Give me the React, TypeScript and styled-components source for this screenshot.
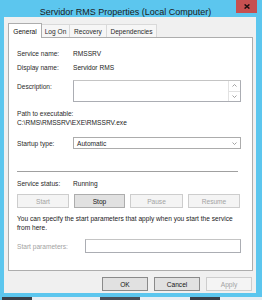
import React from "react";
import styled, { createGlobalStyle, css } from "styled-components";

const Global = createGlobalStyle`
  html, body {
    margin: 0;
    padding: 0;
    background: #5cc6ee;
  }
  * {
    box-sizing: border-box;
  }
`;

const FRAME = "#5cc6ee";
const FONT = `"Liberation Sans", Arial, sans-serif`;

const Window = styled.div`
  width: 262px;
  height: 300px;
  background: ${FRAME};
  display: flex;
  flex-direction: column;
  font-family: ${FONT};
  font-size: 6.6px;
  color: #1e1e1e;
  overflow: hidden;
`;

const TitleBar = styled.div`
  height: 17px;
  display: grid;
  grid-template-columns: 1fr auto 1fr;
  align-items: start;
  padding-right: 5px;
`;

const Title = styled.div`
  grid-column: 2;
  font-size: 9px;
  line-height: 9px;
  margin-top: 8px;
  margin-right: 6px;
  color: #1b1b1b;
  white-space: nowrap;
`;

const CloseButton = styled.div`
  grid-column: 3;
  justify-self: end;
  width: 21px;
  height: 13px;
  background: #c75050;
  display: flex;
  align-items: center;
  justify-content: center;
`;

const Body = styled.div`
  flex: 1;
  margin: 0 6px 0 4px;
  background: #f0f0f0;
  display: flex;
  flex-direction: column;
  padding: 7px 3px 0 4px;
`;

const Tabs = styled.div`
  display: flex;
  height: 13px;
  position: relative;
  z-index: 1;
`;

const Tab = styled.div<{ $active?: boolean; $w: number }>`
  width: ${(p) => p.$w}px;
  height: 13px;
  margin-bottom: -1px;
  border: 1px solid #d9d9d9;
  border-bottom: none;
  border-left-width: 0;
  background: #f6f6f6;
  display: flex;
  align-items: center;
  justify-content: center;
  white-space: nowrap;
  color: #2a2a2a;
  ${(p) =>
    p.$active &&
    css`
      height: 15px;
      margin-top: -1px;
      border-color: #adadad;
      border-left-width: 1px;
      background: #fff;
      margin-bottom: -2px;
      color: #111;
    `}
`;

const Panel = styled.div`
  flex: 1;
  background: #fff;
  border: 1px solid #adadad;
  padding: 10px 11px 0 8px;
  display: flex;
  flex-direction: column;
`;

const Row = styled.div<{ $h: number; $mt?: number; $top?: boolean }>`
  display: flex;
  align-items: ${(p) => (p.$top ? "flex-start" : "center")};
  height: ${(p) => p.$h}px;
  margin-top: ${(p) => p.$mt ?? 0}px;
  white-space: nowrap;
`;

const Label = styled.div<{ $w?: number; $disabled?: boolean; $pt?: number }>`
  width: ${(p) => p.$w ?? 56}px;
  flex: none;
  padding-top: ${(p) => p.$pt ?? 0}px;
  color: ${(p) => (p.$disabled ? "#a2a2a2" : "#2b2b2b")};
`;

const Value = styled.div`
  color: #222;
`;

const TextBox = styled.div<{ $h: number }>`
  flex: 1;
  height: ${(p) => p.$h}px;
  border: 1px solid #abadb3;
  border-top-color: #c4c4c4;
  background: #fff;
  display: flex;
  justify-content: flex-end;
`;

const ScrollCol = styled.div`
  width: 12px;
  display: flex;
  flex-direction: column;
`;

const ScrollBtn = styled.div`
  flex: 1;
  border-left: 1px solid #e2e2e2;
  border-bottom: 1px solid #e2e2e2;
  display: flex;
  align-items: center;
  justify-content: center;
  &:last-child {
    border-bottom: none;
  }
`;

const Select = styled.div`
  flex: 1;
  height: 12px;
  border: 1px solid #acacac;
  background: #fff;
  display: flex;
  align-items: center;
  justify-content: space-between;
  padding: 0 3px 0 3px;
  color: #1e1e1e;
`;

const Separator = styled.div`
  height: 1px;
  background: #a0a0a0;
  margin-top: 22px;
  margin-right: 3px;
`;

const ButtonRow = styled.div`
  display: flex;
  gap: 5px;
  margin-top: 6px;
`;

const Button = styled.div<{ $w: number; $disabled?: boolean; $strong?: boolean }>`
  width: ${(p) => p.$w}px;
  height: 14px;
  display: flex;
  align-items: center;
  justify-content: center;
  border: 1px solid ${(p) => (p.$disabled ? "#cdcdcd" : p.$strong ? "#8a8a8a" : "#adadad")};
  background: ${(p) => (p.$disabled ? "#f4f4f4" : "#e1e1e1")};
  color: ${(p) => (p.$disabled ? "#a3a3a3" : "#141414")};
`;

const Note = styled.div`
  margin-top: 6px;
  line-height: 9px;
  color: #1a1a1a;
`;

const Footer = styled.div`
  height: 22px;
  display: flex;
  justify-content: flex-end;
  gap: 6px;
  padding-top: 6px;
  padding-right: 1px;
`;

const FrameBottom = styled.div`
  height: 4px;
`;

const Strip = styled.div`
  height: 3px;
  display: flex;
  background: #dfe7ee;
`;

const StripBit = styled.div<{ $w: number; $c: string }>`
  width: ${(p) => p.$w}px;
  background: ${(p) => p.$c};
`;

const Chevron = ({ up }: { up?: boolean }) => (
  <svg width="5" height="3" viewBox="0 0 5 3">
    <path
      d={up ? "M0.5 2.5 L2.5 0.5 L4.5 2.5" : "M0.5 0.5 L2.5 2.5 L4.5 0.5"}
      fill="none"
      stroke="#8a8a8a"
      strokeWidth="0.8"
    />
  </svg>
);

const CloseGlyph = () => (
  <svg width="6" height="5" viewBox="0 0 6 5">
    <path d="M0.6 0.4 L5.4 4.6 M5.4 0.4 L0.6 4.6" stroke="#1c1010" strokeWidth="1.4" />
  </svg>
);

const stripBits = [
  { w: 2, c: "#5cc6ee" },
  { w: 30, c: "#3a3f48" },
  { w: 68, c: "#e8edf2" },
  { w: 40, c: "#4a4f58" },
  { w: 50, c: "#e8edf2" },
  { w: 30, c: "#3a3f48" },
  { w: 42, c: "#e8edf2" },
];

export default function App() {
  return (
    <Window>
      <Global />
      <TitleBar>
        <Title>Servidor RMS Properties (Local Computer)</Title>
        <CloseButton>
          <CloseGlyph />
        </CloseButton>
      </TitleBar>
      <Body>
        <Tabs>
          <Tab $active $w={34}>General</Tab>
          <Tab $w={28}>Log On</Tab>
          <Tab $w={37}>Recovery</Tab>
          <Tab $w={50}>Dependencies</Tab>
        </Tabs>
        <Panel>
          <Row $h={10}>
            <Label>Service name:</Label>
            <Value>RMSSRV</Value>
          </Row>
          <Row $h={10} $mt={4}>
            <Label>Display name:</Label>
            <Value>Servidor RMS</Value>
          </Row>
          <Row $h={22} $mt={8} $top>
            <Label $pt={3}>Description:</Label>
            <TextBox $h={22}>
              <ScrollCol>
                <ScrollBtn>
                  <Chevron up />
                </ScrollBtn>
                <ScrollBtn>
                  <Chevron />
                </ScrollBtn>
              </ScrollCol>
            </TextBox>
          </Row>
          <Row $h={10} $mt={6}>
            <Label $w={120}>Path to executable:</Label>
          </Row>
          <Row $h={9}>
            <Value>C:\RMS\RMSSRV\EXE\RMSSRV.exe</Value>
          </Row>
          <Row $h={12} $mt={10}>
            <Label>Startup type:</Label>
            <Select>
              <span>Automatic</span>
              <Chevron />
            </Select>
          </Row>
          <Separator />
          <Row $h={10} $mt={6}>
            <Label>Service status:</Label>
            <Value>Running</Value>
          </Row>
          <ButtonRow>
            <Button $w={52} $disabled>Start</Button>
            <Button $w={51}>Stop</Button>
            <Button $w={53} $disabled>Pause</Button>
            <Button $w={52} $disabled>Resume</Button>
          </ButtonRow>
          <Note>
            You can specify the start parameters that apply when you start the service
            <br />
            from here.
          </Note>
          <Row $h={14} $mt={7}>
            <Label $w={68} $disabled>Start parameters:</Label>
            <TextBox $h={14} />
          </Row>
        </Panel>
        <Footer>
          <Button $w={46} $strong>OK</Button>
          <Button $w={46} $strong>Cancel</Button>
          <Button $w={46} $disabled>Apply</Button>
        </Footer>
      </Body>
      <FrameBottom />
      <Strip>
        {stripBits.map((b, i) => (
          <StripBit key={i} $w={b.w} $c={b.c} />
        ))}
      </Strip>
    </Window>
  );
}
